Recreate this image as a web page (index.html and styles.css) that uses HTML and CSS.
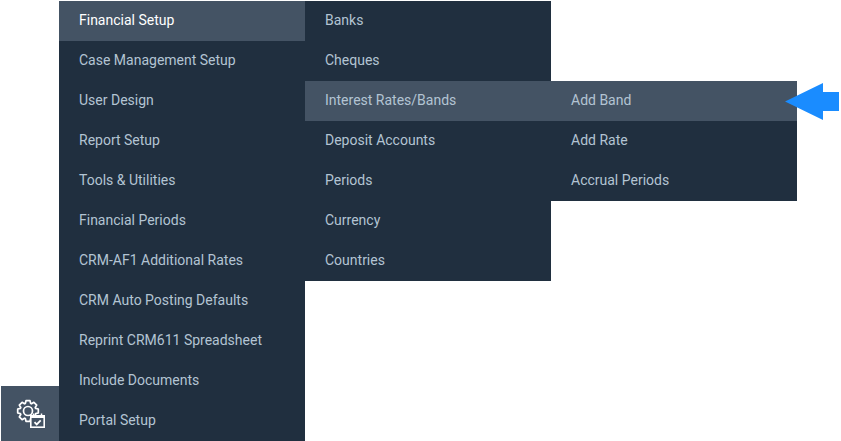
FILE: index.html
```html
<!DOCTYPE html>
<html>
<head>
<title>Setup Menu</title>
<link rel="stylesheet" href="styles.css">
</head>
<body>

<div class="menu-bar">
  <div class="side-button">
    <svg class="side-icon" width="30" height="30" viewBox="0 0 30 30">
      <path class="gear" d="M9.4 4.4L10 1.7H14L14.6 4.4L15.5 4.8L17.9 3.3L20.7 6.1L19.2 8.5L19.6 9.4L22.3 10V14L19.6 14.6L19.2 15.5L20.7 17.9L17.9 20.7L15.5 19.2L14.6 19.6L14 22.3H10L9.4 19.6L8.5 19.2L6.1 20.7L3.3 17.9L4.8 15.5L4.4 14.6L1.7 14V10L4.4 9.4L4.8 8.5L3.3 6.1L6.1 3.3L8.5 4.8Z"/>
      <circle class="gear" cx="12" cy="12" r="4.5"/>
      <rect class="cal" x="14.8" y="16.8" width="13.4" height="11.4"/>
      <rect class="cal-fill" x="14.8" y="16.8" width="13.4" height="2.2"/>
      <path class="cal-tab" d="M17.5 14.5V17M25.5 14.5V17"/>
      <path class="cal-tick" d="M18.5 23.2l2.2 2.2 4-4"/>
    </svg>
  </div>

  <ul class="menu">
    <li class="active">Financial Setup</li>
    <li>Case Management Setup</li>
    <li>User Design</li>
    <li>Report Setup</li>
    <li>Tools &amp; Utilities</li>
    <li>Financial Periods</li>
    <li>CRM-AF1 Additional Rates</li>
    <li>CRM Auto Posting Defaults</li>
    <li>Reprint CRM611 Spreadsheet</li>
    <li>Include Documents</li>
    <li>Portal Setup</li>
  </ul>

  <ul class="menu">
    <li>Banks</li>
    <li>Cheques</li>
    <li class="hover">Interest Rates/Bands</li>
    <li>Deposit Accounts</li>
    <li>Periods</li>
    <li>Currency</li>
    <li>Countries</li>
  </ul>

  <ul class="menu menu-third">
    <li class="hover">Add Band</li>
    <li>Add Rate</li>
    <li>Accrual Periods</li>
  </ul>
</div>

<svg class="arrow" width="54" height="37" viewBox="0 0 54 37">
  <path d="M0 18.5L38 0V9H54V28H38V37Z"/>
</svg>

</body>
</html>
```

FILE: styles.css
```css
html, body {
  margin: 0;
  padding: 0;
  background-color: #fff;
  overflow: hidden;
}

body {
  font-family: 'Roboto', sans-serif;
  font-size: 14px;
  width: 841px;
  height: 441px;
  position: relative;
}

.menu-bar {
  display: flex;
  align-items: flex-start;
  padding: 1px 0 0 1px;
}

.side-button {
  width: 58px;
  height: 55px;
  margin-top: 385px;
  background-color: #445364;
  display: flex;
  align-items: center;
  justify-content: center;
}

.side-icon {
  display: block;
  margin: 1px 0 0 2px;
}

.gear {
  fill: none;
  stroke: #fff;
  stroke-width: 1.7;
  stroke-linejoin: round;
}

.cal {
  fill: #445364;
  stroke: #fff;
  stroke-width: 1.6;
}

.cal-fill {
  fill: #fff;
}

.cal-tab {
  fill: none;
  stroke: #fff;
  stroke-width: 1.5;
}

.cal-tick {
  fill: none;
  stroke: #fff;
  stroke-width: 1.8;
}

.menu {
  list-style: none;
  margin: 0;
  padding: 0;
  width: 246px;
  background-color: #202f3f;
  color: #b3c4d3;
}

.menu li {
  height: 40px;
  line-height: 38px;
  padding-left: 20px;
  box-sizing: border-box;
}

.menu-third {
  margin-top: 80px;
}

.menu .active {
  background-color: #445364;
  color: #fff;
}

.menu .hover {
  background-color: #445364;
}

.arrow {
  position: absolute;
  left: 785px;
  top: 83px;
  fill: #1a8cff;
}
```
